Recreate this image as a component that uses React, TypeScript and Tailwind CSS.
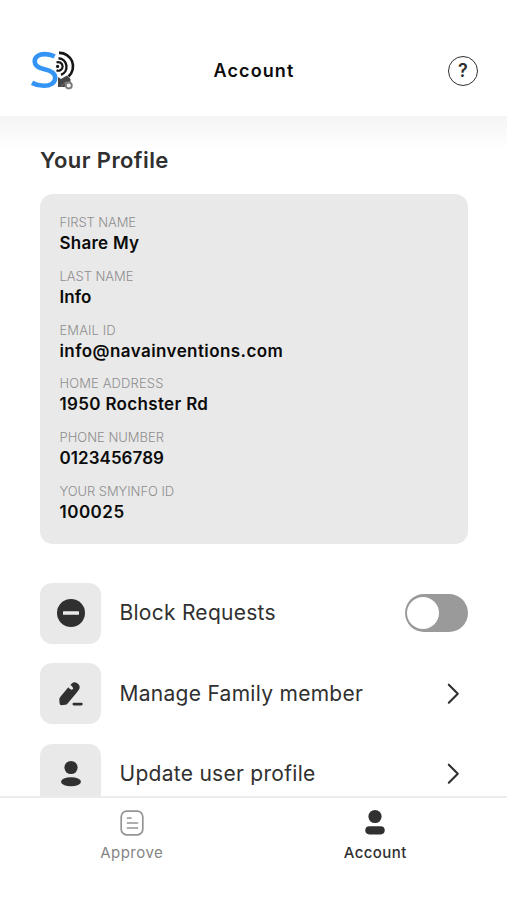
import type { ReactNode } from "react";

type Field = { label: string; value: string; labelClass: string; valueClass: string };

const fields: Field[] = [
  { label: "FIRST NAME", value: "Share My", labelClass: "tracking-[-0.1px]", valueClass: "tracking-[0.25px]" },
  { label: "LAST NAME", value: "Info", labelClass: "tracking-[-0.05px]", valueClass: "tracking-[0.1px]" },
  { label: "EMAIL ID", value: "info@navainventions.com", labelClass: "tracking-[0.1px]", valueClass: "tracking-[0.42px]" },
  { label: "HOME ADDRESS", value: "1950 Rochster Rd", labelClass: "tracking-[0.13px]", valueClass: "tracking-[0.33px]" },
  { label: "PHONE NUMBER", value: "0123456789", labelClass: "tracking-[0px]", valueClass: "tracking-[0.05px]" },
  { label: "YOUR SMYINFO ID", value: "100025", labelClass: "tracking-[-0.05px]", valueClass: "tracking-[0.5px]" },
];

function Logo() {
  return (
    <svg width="46" height="42" viewBox="0 0 46 42" fill="none" className="shrink-0">
      <path d="M24.600 6.500C21.500 4.700 18.500 4.100 15 4.100C8.500 4.100 4.700 6.900 4.700 11.400C4.700 16.100 8.500 17.800 14.500 19.200C20.800 20.600 25.200 22.500 25.200 27.500C25.200 32.900 20.600 35.800 13.700 35.800C9.200 35.800 5.400 34.700 2 32.900" stroke="#3494f5" strokeWidth="4.600" />
      <g stroke="#161616">
        <path d="M29 2.900A13.500 13.500 0 0 1 38.500 26.500" strokeWidth="2.600" />
        <path d="M28.500 8.200A8.600 8.600 0 0 1 31 24.800" strokeWidth="2.400" />
        <path d="M26.500 12.500A4.300 4.300 0 1 1 26.500 20.300" strokeWidth="2.200" />
      </g>
      <circle cx="27.600" cy="16.400" r="1.600" fill="#161616" />
      <path d="M28 27L31 29L37 25.500L40.500 29V37H28Z" fill="#454545" />
      <path d="M30.500 37L36 31.500" stroke="#777" strokeWidth="1" />
      <circle cx="38.800" cy="35.500" r="4" fill="#a0a0a0" />
      <circle cx="38.800" cy="35.500" r="2.800" fill="#f2f2f2" stroke="#777" strokeWidth="1.500" />
    </svg>
  );
}

function UserIcon({ rounded = false }: { rounded?: boolean }) {
  return (
    <svg width="28" height="28" viewBox="0 0 28 28" fill="#303030">
      <circle cx="14" cy="7.500" r="6.600" />
      {rounded ? <rect x="4.300" y="17.200" width="19.400" height="8.200" rx="4.100" /> : <ellipse cx="14" cy="21.700" rx="10" ry="4.500" />}
    </svg>
  );
}

function Row({ icon, label, labelClass, children }: { icon: ReactNode; label: string; labelClass: string; children: ReactNode }) {
  return (
    <div className="flex h-[61px] shrink-0 items-center">
      <div className="flex size-[61px] shrink-0 items-center justify-center rounded-[12px] bg-[#e9e9e9]">{icon}</div>
      <span className={`ml-[18.5px] whitespace-nowrap text-[21px] font-[440] leading-[28px] text-[#303030] ${labelClass}`}>{label}</span>
      <div className="ml-auto flex">{children}</div>
    </div>
  );
}

function Chevron() {
  return (
    <svg width="30" height="30" viewBox="0 0 30 30" fill="none" stroke="#303030" strokeWidth="2.100" strokeLinecap="round" strokeLinejoin="round">
      <path d="M10.800 5.700L19.800 14.700L10.800 23.700" />
    </svg>
  );
}

export default function App() {
  return (
    <div className="flex h-[900px] w-full flex-col overflow-hidden bg-white font-['Inter',sans-serif]">
      <header className="grid h-[116px] shrink-0 grid-cols-[1fr_auto_1fr] items-center bg-white pl-[30px] pr-[29px] pt-[25px]">
        <Logo />
        <h1 className="text-[18px] font-semibold leading-6 tracking-[1.1px] text-[#0b0b0b]">Account</h1>
        <div className="flex size-[30px] items-center justify-center justify-self-end rounded-full border-[1.5px] border-[#303030]">
          <span className="text-[18px] font-semibold leading-none text-[#303030]">?</span>
        </div>
      </header>

      <main className="flex min-h-0 flex-1 flex-col overflow-hidden bg-[linear-gradient(#f5f5f5_0px,#f8f8f8_12px,#ffffff_34px)] px-[40px] pr-[39px]">
        <h2 className="mt-[30px] text-[22px] font-semibold leading-[28px] tracking-[0.42px] text-[#303030]">Your Profile</h2>
        <section className="mt-[20px] flex h-[350px] shrink-0 flex-col rounded-[13px] bg-[#e9e9e9] pl-[19.5px] pt-[18px]">
          {fields.map((f) => (
            <div key={f.label} className="h-[53.8px] shrink-0 whitespace-nowrap">
              <div className={`text-[13px] font-light leading-[20px] text-[#8e8e8e] ${f.labelClass}`}>{f.label}</div>
              <div className={`text-[17px] font-semibold leading-[22px] text-[#0b0b0b] ${f.valueClass}`}>{f.value}</div>
            </div>
          ))}
        </section>
        <div className="mt-[38.5px] flex flex-col gap-[19.500px]">
          <Row
            label="Block Requests"
            labelClass="tracking-[0.26px]"
            icon={
              <svg width="28" height="28" viewBox="0 0 28 28">
                <circle cx="14" cy="14" r="14" fill="#303030" />
                <rect x="6" y="12.300" width="16" height="3.400" rx="0.500" fill="#e9e9e9" />
              </svg>
            }
          >
            <div className="flex h-[38px] w-[63px] items-center rounded-full bg-[#9a9a9a] pl-[2px]">
              <div className="size-[32px] rounded-full bg-white" />
            </div>
          </Row>
          <Row
            label="Manage Family member"
            labelClass="tracking-[0.28px]"
            icon={
              <svg width="26" height="26" viewBox="0 0 26 26" fill="#303030">
                <path d="M10.300 6.200L2.200 16.100Q1.300 17.200 1.300 18.600L1.600 22.600Q1.800 24.200 3.300 24.200L7.400 23.700Q8.700 23.500 9.600 22.400L18.400 11.900Q20.800 9.200 21.600 7.200Q22.200 4.800 20.500 3.200L18.800 1.900Q16.300 0.300 14 2.200L12.400 4.100Q14.200 5 15.300 7.400Q13.800 9.300 12.600 8.300Q11.200 7.600 10.300 6.200Z" />
                <rect x="14.500" y="21.700" width="10.200" height="2.700" rx="1.300" />
              </svg>
            }
          >
            <Chevron />
          </Row>
          <Row label="Update user profile" labelClass="tracking-[0.28px]" icon={<UserIcon />}>
            <Chevron />
          </Row>
        </div>
      </main>

      <nav className="grid h-[104px] shrink-0 grid-cols-2 border-t-2 border-[#ececec] bg-white pl-[10px] pr-[10px] pt-[11px]">
        <div className="flex flex-col items-center">
          <svg width="28" height="28" viewBox="0 0 28 28" fill="none" stroke="#949494" strokeWidth="1.700" strokeLinecap="round">
            <rect x="3.200" y="2.200" width="21.600" height="23.600" rx="5.500" />
            <path d="M9.500 9H13M9.500 14H19.500M9.500 19H19.500" />
          </svg>
          <span className="mt-[5.5px] text-[15px] leading-5 tracking-[0.5px] text-[#858585]">Approve</span>
        </div>
        <div className="flex flex-col items-center">
          <UserIcon rounded />
          <span className="mt-[5.5px] text-[15px] font-medium leading-5 tracking-[0.4px] text-[#303030]">Account</span>
        </div>
      </nav>
    </div>
  );
}
